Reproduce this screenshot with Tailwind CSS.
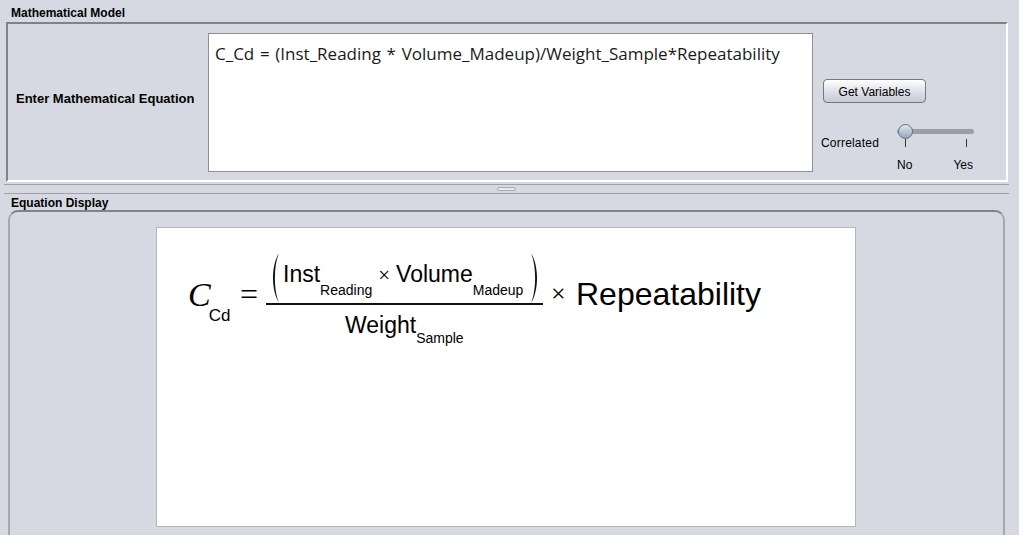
<!DOCTYPE html>
<html>
<head>
    <meta charset="UTF-8">
    <title>Mathematical Model</title>
    <script src="https://cdn.jsdelivr.net/npm/@tailwindcss/browser@4"></script>
</head>
<body class="bg-[#d6d9e2] h-[535px] w-[1019px] overflow-hidden font-['Liberation_Sans',sans-serif] text-black">

    <!--Mathematical Model-->
    <section class="h-[184px] pt-[6px] pl-[6px] pr-[11px]">
        <h2 class="h-[16px] pl-[5px] text-[12px] leading-[15px] font-bold">Mathematical Model</h2>
        <div class="h-[160px] flex border-2 border-t-[#808287] border-l-[#808287] border-r-white border-b-white">
            <div class="w-[200px] pl-[8px] pt-[67px] text-[13px] leading-[16px] font-bold whitespace-nowrap">Enter Mathematical Equation</div>
            <div class="mt-[9px] w-[605px] h-[139px] bg-white border border-[#8e9097] pl-[6px] pt-[7px] font-['Open_Sans',sans-serif] text-[17px] [word-spacing:1.25px] leading-[25px] text-[#1a1a1a] whitespace-nowrap">C_Cd = (Inst_Reading * Volume_Madeup)/Weight_Sample*Repeatability</div>
            <div class="pl-[8px] pt-[55px]">
                <button class="ml-[2px] block w-[103px] h-[24px] pt-[1px] rounded-[4px] border border-[#75787f] bg-gradient-to-b from-white via-[#dfe2ea] to-[#c6cad3] text-[12px] leading-[20px] text-black">Get Variables</button>
                <div class="flex mt-[21px]">
                    <span class="w-[76px] pt-[12px] text-[12px] leading-[15px] tracking-[0.2px]">Correlated</span>
                    <div class="w-[77px]">
                        <div class="relative h-[5px] mt-[5px] rounded-full bg-[#9b9ea6]">
                            <div class="absolute left-[1px] top-[-5px] w-[15px] h-[15px] rounded-full border border-[#5f6f85] bg-gradient-to-b from-[#dfe6ee] to-[#98a9bd]"></div>
                        </div>
                        <div class="flex justify-between pl-[8px] pr-[7px] mt-[5px]">
                            <i class="block w-px h-[8px] bg-[#333]"></i>
                            <i class="block w-px h-[8px] bg-[#333]"></i>
                        </div>
                        <div class="flex justify-between pr-[1px] mt-[11px] text-[12px] leading-[15px]">
                            <span>No</span><span>Yes</span>
                        </div>
                    </div>
                </div>
            </div>
        </div>
    </section>

    <!--Divider-->
    <div class="h-[10px] ml-[4px] mr-[10px] border-y border-[#a0a2a9] flex justify-center">
        <div class="mt-[2px] w-[19px] h-[4px] rounded-[2px] bg-[#e6e8ee] border border-[#a9abb2]"></div>
    </div>

    <!--Equation Display-->
    <section class="pt-[2px] pl-[8px] pr-[14px]">
        <h2 class="h-[14px] pl-[3px] text-[12px] leading-[15px] font-bold">Equation Display</h2>
        <div class="h-[340px] pt-[15px] pl-[146px] rounded-t-[10px] border-2 border-b-0 border-[#a6a8af] border-t-[#808287]">
            <div class="w-[700px] h-[300px] bg-white border border-[#b4b6bb] pl-[31px] pt-[21px]">
                <div class="flex items-center h-[100px] whitespace-nowrap">
                    <div class="w-[52px] h-[40px] mb-[8px] leading-[40px] font-['Liberation_Serif',serif] italic text-[34px]">C<span class="not-italic ml-[-2px] font-['Liberation_Sans',sans-serif] text-[17px] align-[-15px]">Cd</span></div>
                    <div class="w-[26px] mb-[10px] text-[32px] leading-[32px] font-['Liberation_Serif',serif]">=</div>
                    <div class="w-[277px]">
                        <div class="h-[51px] flex items-end border-b-2 border-[#111] pl-[4px]">
                            <svg class="w-[10px] h-[50px]" viewBox="0 0 10 50" fill="#111"><path d="M9 0C1 13 1 37 9 50C3.500 37 3.500 13 9 0Z"/></svg>
                            <div class="text-[23px] leading-[34px] pl-[3px] w-[250px] h-[46px]">Inst<span class="text-[14px] align-[-13px]">Reading</span><span class="font-['Liberation_Serif',serif] text-[21px] px-[6px]">×</span>Volume<span class="text-[14px] align-[-13px]">Madeup</span></div>
                            <svg class="w-[10px] h-[50px]" viewBox="0 0 10 50" fill="#111"><path d="M1 0C9 13 9 37 1 50C6.500 37 6.500 13 1 0Z"/></svg>
                        </div>
                        <div class="h-[40px] pl-[79px] text-[23px] leading-[40px]">Weight<span class="text-[14px] align-[-10px]">Sample</span></div>
                    </div>
                    <div class="pl-[8px] w-[33px] mb-[10px] font-['Liberation_Serif',serif] text-[26px] leading-[30px]">×</div>
                    <div class="mb-[10px] text-[32px] leading-[40px]">Repeatability</div>
                </div>
            </div>
        </div>
    </section>
</body>
</html>
